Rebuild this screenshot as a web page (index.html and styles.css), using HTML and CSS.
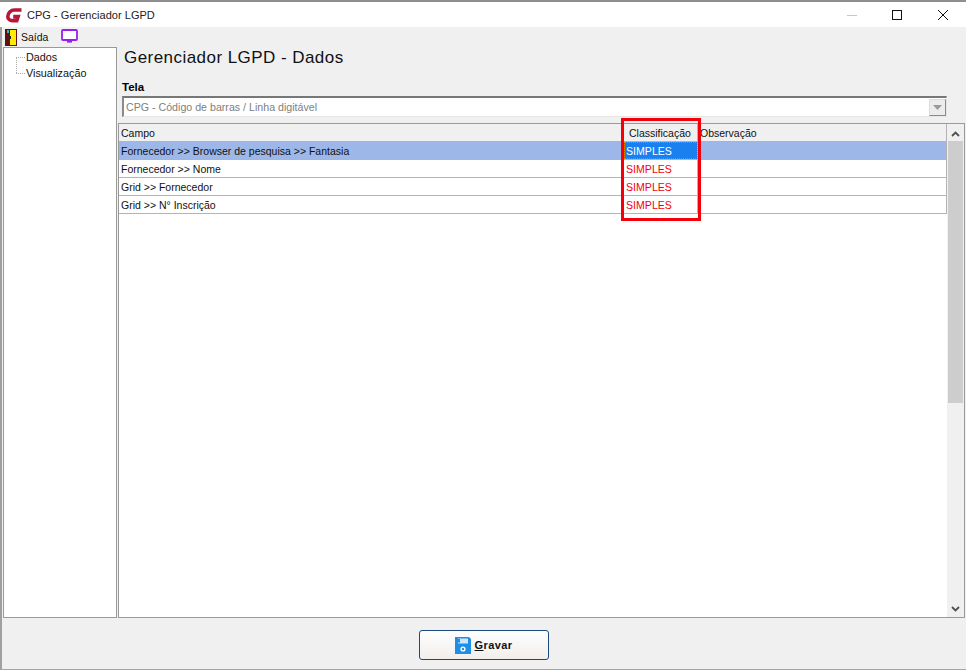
FILE: index.html
```html
<!DOCTYPE html>
<html lang="pt">
<head>
<meta charset="utf-8">
<title>CPG - Gerenciador LGPD</title>
<link rel="stylesheet" href="styles.css">
</head>
<body>
<div class="window">
  <header class="titlebar">
    <svg class="logo" width="18" height="18" viewBox="0 0 18 18"><path d="M16.5 4H9.5C5.8 4 2.8 7 2.8 10.4c0 2.6 2 4.2 4.6 4.2h4.4l1.3-4H8.2" fill="none" stroke="#b8163a" stroke-width="3.6"/></svg>
    <span class="title">CPG - Gerenciador LGPD</span>
    <div class="winbtns">
      <svg width="12" height="12" viewBox="0 0 12 12"><path d="M0 6.5h10" stroke="#c8c8c8"/></svg>
      <svg width="12" height="12" viewBox="0 0 12 12"><rect x="0.5" y="1.5" width="9" height="9" fill="none" stroke="#111"/></svg>
      <svg width="12" height="12" viewBox="0 0 12 12"><path d="M1 1l10 10M11 1L1 11" stroke="#111" fill="none"/></svg>
    </div>
  </header>
  <nav class="toolbar">
    <svg class="exit" width="12" height="17" viewBox="0 0 12 17"><rect width="12" height="17" fill="#5c1212"/><rect x="5" y="1" width="6" height="15" fill="#ffea00"/><rect x="2" y="1" width="2" height="3" fill="#2ab4c8"/><rect x="5" y="7" width="1" height="3" fill="#222"/></svg>
    <span class="saida">Saída</span>
    <svg class="monitor" width="17" height="14" viewBox="0 0 17 14"><rect x="1" y="1" width="15" height="10" rx="1" fill="#fff" stroke="#9a1ef0" stroke-width="1.8"/><path d="M6 12.6h5" stroke="#9a1ef0" stroke-width="2"/></svg>
  </nav>
  <div class="body">
    <aside class="tree">
      <div class="node">Dados</div>
      <div class="node">Visualização</div>
    </aside>
    <main class="main">
      <h1 class="heading">Gerenciador LGPD - Dados</h1>
      <div class="label">Tela</div>
      <div class="combo">
        <span class="combo-text">CPG - Código de barras / Linha digitável</span>
        <span class="combo-btn"><svg width="9" height="5" viewBox="0 0 9 5"><path d="M0 0h9L4.5 5z" fill="#9a9a9a"/></svg></span>
      </div>
      <section class="gridbox">
        <div class="table">
          <div class="row head"><div class="c1">Campo</div><div class="c2 hc">Classificação</div><div class="c3">Observação</div></div>
          <div class="row selected"><div class="c1">Fornecedor &gt;&gt; Browser de pesquisa &gt;&gt; Fantasia</div><div class="c2 focus">SIMPLES</div><div class="c3"></div></div>
          <div class="row"><div class="c1">Fornecedor &gt;&gt; Nome</div><div class="c2 red">SIMPLES</div><div class="c3"></div></div>
          <div class="row"><div class="c1">Grid &gt;&gt; Fornecedor</div><div class="c2 red">SIMPLES</div><div class="c3"></div></div>
          <div class="row"><div class="c1">Grid &gt;&gt; N° Inscrição</div><div class="c2 red">SIMPLES</div><div class="c3"></div></div>
          <div class="highlight"></div>
        </div>
        <div class="scrollbar">
          <svg class="arrow" width="9" height="6" viewBox="0 0 9 6"><path d="M1 5l3.5-3.5L8 5" fill="none" stroke="#505050" stroke-width="1.8"/></svg>
          <div class="thumb"></div>
          <div class="track"></div>
          <svg class="arrow" width="9" height="6" viewBox="0 0 9 6"><path d="M1 1l3.5 3.5L8 1" fill="none" stroke="#505050" stroke-width="1.8"/></svg>
        </div>
      </section>
    </main>
  </div>
  <footer class="footer">
    <button class="save" type="button">
      <svg width="16" height="17" viewBox="0 0 16 17"><path d="M0 0h14l2 2v15H0z" fill="#1e8fe8"/><rect x="3" y="1.5" width="10" height="5" fill="#cfe6f8"/><rect x="3" y="2" width="2" height="3.5" fill="#1e8fe8"/><circle cx="8" cy="12" r="2.6" fill="#fff"/><circle cx="8" cy="12" r="1.2" fill="#1e8fe8"/></svg>
      <span class="save-text"><u>G</u>ravar</span>
    </button>
  </footer>
</div>
</body>
</html>
```
FILE: styles.css
```css
* { box-sizing: border-box; }
html, body { margin: 0; padding: 0; }
body { width: 966px; height: 671px; overflow: hidden; background: #fff; font-family: "Liberation Sans", Arial, sans-serif; font-size: 11px; color: #000; }
.window { width: 966px; height: 671px; display: flex; flex-direction: column; border-top: 2px solid #8e8e8e; padding-bottom: 1px; background: #fff; }
.titlebar { height: 25px; flex: none; background: #fff; display: flex; align-items: center; padding-left: 5px; }
.logo { margin-right: 4px; margin-top: 1px; }
.title { font-size: 11px; color: #222; letter-spacing: 0.03px; }
.winbtns { margin-left: auto; display: flex; gap: 33px; padding-right: 17px; margin-top: 1px; }
.toolbar { height: 20px; flex: none; display: flex; align-items: center; padding-left: 3px; border-left: 2px solid #a0a0a0; background: #f0f0f0; }
.saida { font-size: 10.5px; margin-left: 4px; color: #111; }
.monitor { margin-left: 13px; margin-top: -2px; }
.body { flex: none; height: 571px; display: flex; border-left: 2px solid #a0a0a0; padding-left: 1px; background: #f0f0f0; }
.tree { width: 114px; flex: none; margin-right: 1px; background: #fff; border: 1px solid #9a9a9a; height: 571px; padding: 1px 0 0 22px; }
.node { height: 16px; line-height: 16px; position: relative; font-size: 10.8px; color: #111; }
.node::before { content: ""; position: absolute; left: -10px; top: 8px; width: 9px; border-top: 1px dotted #aaa; }
.node + .node::after { content: ""; position: absolute; left: -10px; top: -8px; height: 16px; border-left: 1px dotted #aaa; }
.main { flex: 1; min-width: 0; display: flex; flex-direction: column; }
.heading { margin: 0 0 0 6px; height: 33px; padding-top: 1px; line-height: 20px; font-size: 17px; font-weight: 400; letter-spacing: 0.45px; color: #111; }
.label { margin: 0 0 0 4px; height: 16px; line-height: 14px; font-weight: 700; font-size: 11.5px; }
.combo { margin: 0 0 0 4px; width: 825px; height: 21px; background: #fff; border: 1px solid #e6e6e6; border-top: 2px solid #777; border-left: 2px solid #8a8a8a; display: flex; align-items: center; justify-content: space-between; }
.combo-text { color: #808080; padding-left: 2px; font-size: 10.65px; }
.combo-btn { width: 17px; height: 17px; background: #ececec; border: 1px solid #8a8a8a; border-top-color: #ddd; border-left-color: #ddd; display: flex; align-items: center; justify-content: center; }
.gridbox { margin-top: 6px; width: 847px; height: 495px; background: #fff; border: 1px solid #9a9a9a; display: flex; }
.table { width: 828px; flex: none; position: relative; }
.row { display: flex; height: 18px; line-height: 19px; border-bottom: 1px solid #b4b4b4; border-right: 1px solid #b4b4b4; font-size: 10.5px; color: #111; }
.c1 { width: 505px; padding-left: 2px; flex: none; }
.c2 { width: 74px; flex: none; padding-left: 2px; border-right: 1px solid #b4b4b4; }
.c3 { flex: 1; padding-left: 2px; }
.head { background: #f0f0f0; }
.hc { padding-left: 5px; }
.selected { background: #9db8e8; }
.focus { background: #1a80f0; color: #fff; outline: 1px dotted #e08000; outline-offset: -1px; font-size: 10.6px; }
.red { color: #f5000a; font-size: 10.6px; }
.highlight { position: absolute; left: 502px; top: -6px; width: 80px; height: 103px; border: 3px solid #f5000a; }
.scrollbar { flex: 1; background: #f0f0f0; display: flex; flex-direction: column; align-items: center; padding-bottom: 1px; }
.arrow { flex: none; margin: 7px 0 4px; }
.thumb { width: 15px; height: 262px; flex: none; background: #cdcdcd; }
.track { flex: 1; }
.footer { height: 52px; flex: none; display: flex; justify-content: center; align-items: flex-start; border-left: 2px solid #a0a0a0; border-bottom: 1px solid #a5a5a5; background: #f0f0f0; }
.save { width: 130px; height: 30px; margin-top: 12px; margin-left: -1px; border: 1px solid #1a4a80; border-radius: 3px; background: linear-gradient(#fff, #f2eeeb); display: flex; align-items: center; justify-content: center; gap: 4px; font-family: "Liberation Sans", Arial, sans-serif; font-size: 11px; font-weight: 700; letter-spacing: 0.4px; color: #111; padding: 0; }
```
